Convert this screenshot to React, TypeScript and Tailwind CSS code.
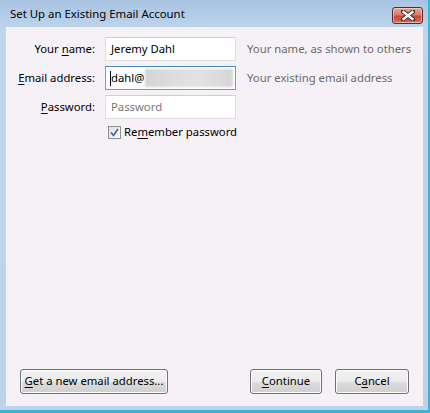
import React from "react";

const font = { fontFamily: '"Noto Sans", "Open Sans", sans-serif' };

function U({ children }: { children: React.ReactNode }) {
  return <span className="underline underline-offset-2">{children}</span>;
}

function Btn({ children, w }: { children: React.ReactNode; w: string }) {
  return (
    <div
      className={`${w} h-[25px] rounded-[3px] border border-[#707070] flex items-center justify-center whitespace-nowrap text-black shadow-[inset_0_0_0_1px_#fcfcfc] bg-[linear-gradient(to_bottom,#f2f2f2_0%,#ebebeb_50%,#dddddd_51%,#cfcfcf_100%)]`}
    >
      {children}
    </div>
  );
}

export default function App() {
  return (
    <div
      className="w-[430px] h-[413px] bg-[linear-gradient(to_bottom,#a9c4e2_0px,#bed5ec_30px,#bcd3eb_100%)] border-r-2 border-b-[3px] border-[#3cb4d8] flex flex-col text-[11.3px]"
      style={font}
    >
      <div className="h-[27px] flex items-start pl-[10px] pr-[5px] pt-[6px]">
        <div className="flex-1 text-[11.4px] text-black leading-[16px] whitespace-nowrap">Set Up an Existing Email Account</div>
        <div className="mt-[1px] w-[31px] h-[17px] rounded-[3px] border border-[#5b2b2b] bg-[linear-gradient(to_bottom,#e9a99b_0%,#d97b6a_45%,#c54a38_55%,#d2705c_100%)] flex items-center justify-center shadow-[inset_0_0_0_1px_rgba(255,220,210,0.6)]">
          <svg width="14" height="11" viewBox="0 0 14 11">
            <path d="M2 1.5 L12 9.5 M12 1.5 L2 9.5" stroke="#3a2020" strokeWidth="4.2" strokeLinecap="square" />
            <path d="M2.5 2 L11.5 9 M11.5 2 L2.5 9" stroke="#ffffff" strokeWidth="2.4" strokeLinecap="square" />
          </svg>
        </div>
      </div>
      <div className="ml-[6px] mr-[5px] w-[417px] h-[379px] bg-[#f5f1f6] flex flex-col justify-between pt-[10px] pb-[12px]">
        <div className="flex flex-col gap-[5px]">
          <div className="flex items-center h-[24px]">
            <div className="w-[89px] text-right text-black whitespace-nowrap">
              Your <U>n</U>ame:
            </div>
            <div className="ml-[10px] w-[131px] h-[24px] border border-[#dedede] border-t-[#cfcfcf] bg-white flex items-center pl-[5px] text-black">
              Jeremy Dahl
            </div>
            <div className="ml-[11px] text-[#6b6b6b] whitespace-nowrap">Your name, as shown to others</div>
          </div>
          <div className="flex items-center h-[24px]">
            <div className="w-[89px] text-right text-black whitespace-nowrap">
              <U>E</U>mail address:
            </div>
            <div className="ml-[10px] w-[131px] h-[24px] border border-[#6aa0cf] border-t-[#4a88c0] bg-white flex items-center pl-[4px] text-black">
              <div className="w-[1px] h-[15px] bg-black" />
              <span>dahl@</span>
              <div className="ml-[1px] w-[88px] h-[18px] bg-[linear-gradient(to_right,#d4d4d4,#dcdcdc_30%,#e2e2e2_60%,#d6d6d6)] blur-[1px]" />
            </div>
            <div className="ml-[11px] text-[#6b6b6b] whitespace-nowrap">Your existing email address</div>
          </div>
          <div className="flex items-center h-[24px]">
            <div className="w-[89px] text-right text-black whitespace-nowrap">
              <U>P</U>assword:
            </div>
            <div className="ml-[10px] w-[131px] h-[24px] border border-[#dedede] border-t-[#cfcfcf] bg-white flex items-center pl-[5px] text-[#7a7a7a]">
              Password
            </div>
          </div>
          <div className="flex items-center h-[14px] mt-[1px] pl-[102px]">
            <div className="w-[13px] h-[13px] border border-[#8e8f8f] bg-[linear-gradient(to_bottom_right,#dcdcdc,#ffffff)] flex items-center justify-center">
              <svg width="9" height="9" viewBox="0 0 9 9">
                <path d="M1 4.5 L3.5 7.5 L8 1" stroke="#3f5ea8" strokeWidth="1.6" fill="none" />
              </svg>
            </div>
            <div className="ml-[3px] text-black whitespace-nowrap">
              Re<U>m</U>ember password
            </div>
          </div>
        </div>
        <div className="flex items-center px-[14px]">
          <Btn w="w-[148px]">
            <span>
              <U>G</U>et a new email address...
            </span>
          </Btn>
          <div className="flex-1" />
          <Btn w="w-[72px]">
            <span>
              <U>C</U>ontinue
            </span>
          </Btn>
          <div className="w-[13px]" />
          <Btn w="w-[74px]">
            <span>
              C<U>a</U>ncel
            </span>
          </Btn>
        </div>
      </div>
    </div>
  );
}
